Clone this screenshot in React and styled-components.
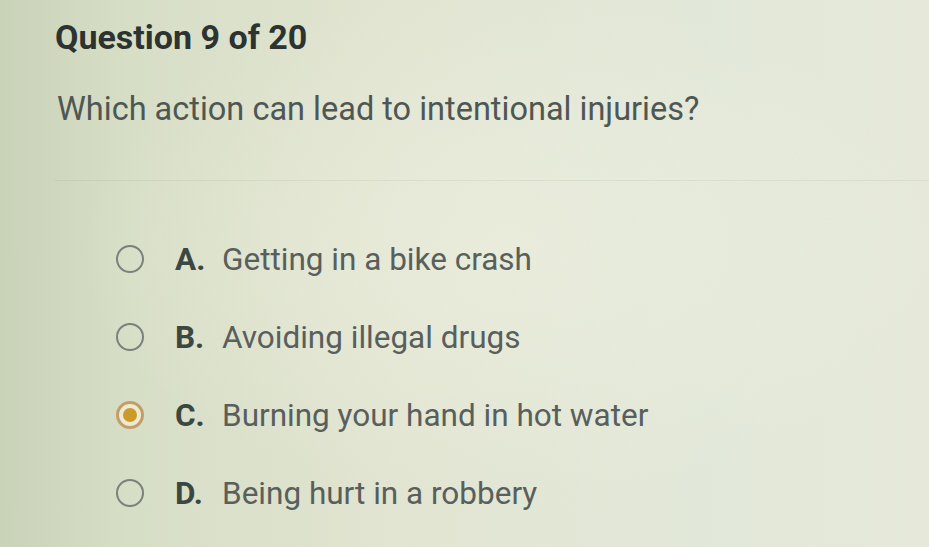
import React from 'react'
import styled, { createGlobalStyle } from 'styled-components'

const GlobalStyle = createGlobalStyle`
    html, body {
        margin: 0;
        padding: 0;
    }
    body {
        font-family: Roboto, "Liberation Sans", Arial, sans-serif;
    }
`

const options = [
    { letter: 'A.', text: 'Getting in a bike crash' },
    { letter: 'B.', text: 'Avoiding illegal drugs' },
    { letter: 'C.', text: 'Burning your hand in hot water', selected: true },
    { letter: 'D.', text: 'Being hurt in a robbery' },
]

function App() {
    return (
        <>
            <GlobalStyle />
            <Page>
                <Header>
                    <Heading>Question 9 of 20</Heading>
                    <Prompt>Which action can lead to intentional injuries?</Prompt>
                </Header>
                <Divider />
                <OptionList>
                    {options.map((o) => (
                        <Option key={o.letter}>
                            <Radio selected={o.selected}>
                                {o.selected && <Dot />}
                            </Radio>
                            <Letter>{o.letter}</Letter>
                            <OptionText>{o.text}</OptionText>
                        </Option>
                    ))}
                </OptionList>
            </Page>
        </>
    )
}

export default App

const Page = styled.div`
    width: 929px;
    height: 547px;
    overflow: hidden;
    background:
        radial-gradient(ellipse at 55% 45%, rgba(238, 240, 224, 0.6) 0%, rgba(238, 240, 224, 0) 60%),
        linear-gradient(90deg, #c9d3b8 0%, #d7dec6 14%, #e2e5d2 45%, #e2e8d9 75%, #e6e9da 100%);
    display: flex;
    flex-direction: column;
`

const Header = styled.div`
    padding: 17px 0 0 55px;
    display: flex;
    flex-direction: column;
    gap: 33px;
`

const Heading = styled.h1`
    margin: 0;
    font-size: 34px;
    line-height: 40px;
    font-weight: 700;
    color: #2c3331;
`

const Prompt = styled.p`
    margin: 0 0 0 2px;
    font-size: 32.5px;
    line-height: 38px;
    font-weight: 400;
    color: #4f5754;
`

const Divider = styled.hr`
    margin: 52px 0 0 55px;
    border: none;
    height: 1px;
    background: rgba(90, 100, 80, 0.09);
`

const OptionList = styled.div`
    margin-top: 39px;
    padding-left: 116px;
    display: flex;
    flex-direction: column;
`

const Option = styled.div`
    height: 78px;
    display: flex;
    align-items: center;
`

const Radio = styled.div`
    width: 28px;
    height: 28px;
    box-sizing: border-box;
    border-radius: 50%;
    border: ${(p) => (p.selected ? '3px solid #bfa06a' : '2px solid #7b817d')};
    background: ${(p) => (p.selected ? '#f0e8d2' : 'transparent')};
    display: grid;
    place-items: center;
    flex-shrink: 0;
`

const Dot = styled.div`
    width: 14px;
    height: 14px;
    border-radius: 50%;
    background: #c89b2a;
`

const Letter = styled.span`
    margin-left: 31px;
    width: 47px;
    font-size: 31.5px;
    font-weight: 700;
    color: #3b4842;
`

const OptionText = styled.span`
    font-size: 31.5px;
    font-weight: 400;
    color: #585f5c;
`
